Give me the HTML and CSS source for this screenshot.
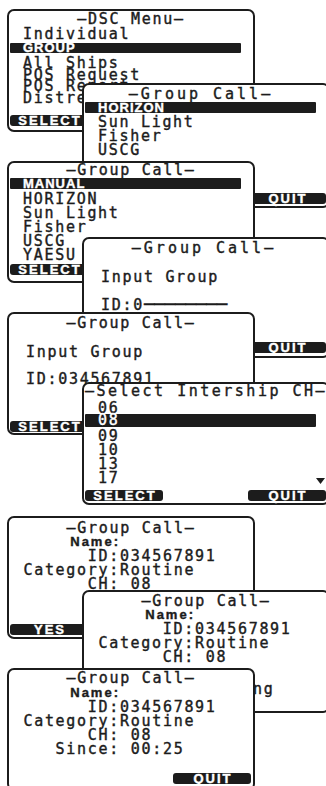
FILE: index.html
```html
<!DOCTYPE html>
<html lang="en">
  <head>
    <meta charset="UTF-8" />
    <meta name="viewport" content="width=device-width, initial-scale=1.0" />
    <title>DSC Group Call</title>
    <link rel="stylesheet" href="styles.css">
  </head>
  <body>
    <div class="sheet">
      <!-- step 1: DSC menu -->
      <section class="screen at-left dsc-menu">
        <div class="title">—DSC Menu—</div>
        <div class="row">Individual</div>
        <div class="row hi">GROUP</div>
        <div class="row">All Ships</div>
        <div class="row">POS Request</div>
        <div class="row">POS Report</div>
        <div class="row">Distress</div>
        <div class="keys"><span class="key">SELECT</span></div>
      </section>

      <!-- step 2: group directory -->
      <section class="screen at-right group-pick">
        <div class="title">—Group Call—</div>
        <div class="row hi">HORIZON</div>
        <div class="row">Sun Light</div>
        <div class="row">Fisher</div>
        <div class="row">USCG</div>
        <div class="keys"><span class="key blank"></span><span class="key">QUIT</span></div>
      </section>

      <!-- step 3: manual entry -->
      <section class="screen at-left group-manual">
        <div class="title">—Group Call—</div>
        <div class="row hi">MANUAL</div>
        <div class="row">HORIZON</div>
        <div class="row">Sun Light</div>
        <div class="row">Fisher</div>
        <div class="row">USCG</div>
        <div class="row">YAESU</div>
        <div class="keys"><span class="key">SELECT</span></div>
      </section>

      <!-- step 4: empty group id -->
      <section class="screen at-right id-input id-blank">
        <div class="title">—Group Call—</div>
        <div class="prompt">Input Group</div>
        <div class="id-line">ID:0<span class="dashes">────────</span></div>
        <div class="keys"><span class="key blank"></span><span class="key">QUIT</span></div>
      </section>

      <!-- step 5: filled group id -->
      <section class="screen at-left id-input id-full">
        <div class="title">—Group Call—</div>
        <div class="prompt">Input Group</div>
        <div class="id-line">ID:034567891</div>
        <div class="keys"><span class="key">SELECT</span></div>
      </section>

      <!-- step 6: intership channel -->
      <section class="screen at-right ch-pick">
        <div class="title">—Select Intership CH—</div>
        <div class="row">06</div>
        <div class="row hi">08</div>
        <div class="row">09</div>
        <div class="row">10</div>
        <div class="row">13</div>
        <div class="row last">17<svg class="more" width="9" height="6" viewBox="0 0 9 6"><path d="M0 0h9L4.5 6z" fill="#1c1c1c"/></svg></div>
        <div class="keys"><span class="key">SELECT</span><span class="key">QUIT</span></div>
      </section>

      <!-- step 7: confirm -->
      <section class="screen at-left call-info confirm">
        <div class="title">—Group Call—</div>
        <div class="fields">
          <span class="label name">Name:</span><span></span>
          <span class="label">ID:</span><span>034567891</span>
          <span class="label">Category:</span><span>Routine</span>
          <span class="label">CH:</span><span> 08</span>
        </div>
        <div class="keys"><span class="key">YES</span></div>
      </section>

      <!-- step 8: transmitting -->
      <section class="screen at-right call-info calling">
        <div class="title">—Group Call—</div>
        <div class="fields">
          <span class="label name">Name:</span><span></span>
          <span class="label">ID:</span><span>034567891</span>
          <span class="label">Category:</span><span>Routine</span>
          <span class="label">CH:</span><span> 08</span>
        </div>
        <div class="status">Transmitting</div>
      </section>

      <!-- step 9: call sent -->
      <section class="screen at-left call-info sent">
        <div class="title">—Group Call—</div>
        <div class="fields">
          <span class="label name">Name:</span><span></span>
          <span class="label">ID:</span><span>034567891</span>
          <span class="label">Category:</span><span>Routine</span>
          <span class="label">CH:</span><span> 08</span>
          <span class="label">Since:</span><span> 00:25</span>
        </div>
        <div class="keys"><span class="key blank"></span><span class="key">QUIT</span></div>
      </section>
    </div>
  </body>
</html>
```

FILE: styles.css
```css
* {
  margin: 0;
  padding: 0;
  box-sizing: border-box;
}

html,
body {
  overflow: hidden;
}

body {
  background: #fff;
  color: #1c1c1c;
  font-family: "DejaVu Sans Mono", monospace;
  font-size: 15px;
  letter-spacing: 1.7px;
  -webkit-text-stroke: 0.4px currentColor;
}

.sheet {
  display: flex;
  flex-direction: column;
  align-items: flex-start;
  padding-top: 9px;
}

/* one LCD screen */
.screen {
  position: relative;
  flex-shrink: 0;
  display: flex;
  flex-direction: column;
  width: 248px;
  height: 123px;
  border: 2px solid #1c1c1c;
  border-radius: 7px;
  background: #fff;
}

.at-left {
  margin-left: 7px;
}

.at-right {
  margin-left: 82px;
}

.title {
  height: 14px;
  line-height: 12px;
  text-align: center;
  white-space: pre;
}

.row {
  height: 14px;
  line-height: 12px;
  padding-left: 14px;
  white-space: pre;
}

.row.hi {
  width: 231px;
  height: 11px;
  margin: 0 0 3px 1px;
  padding-left: 13px;
  line-height: 11px;
  background: #1c1c1c;
  color: #fff;
  font-family: "Liberation Sans", Arial, sans-serif;
  font-weight: bold;
  font-size: 13px;
  letter-spacing: 1px;
  border-radius: 1px;
}

.keys {
  display: flex;
  justify-content: space-between;
  margin-top: auto;
  padding: 0 2px 0 1px;
}

.key {
  width: 78px;
  height: 11px;
  line-height: 11px;
  padding-left: 2px;
  background: #1c1c1c;
  color: #fff;
  border-radius: 3px;
  text-align: center;
  font-family: "Liberation Sans", Arial, sans-serif;
  font-weight: bold;
  font-size: 13px;
  letter-spacing: 2px;
}

.key.blank {
  visibility: hidden;
}

/* step 1 */
.dsc-menu .title {
  height: 15px;
  margin-top: 2px;
}

.dsc-menu .row {
  height: 11.7px;
}

.dsc-menu .row:nth-child(2) {
  height: 15px;
}

.dsc-menu .row.hi {
  height: 10px;
  line-height: 10px;
  margin-bottom: 4px;
}

.dsc-menu .keys {
  margin-bottom: 4px;
}

/* step 2 */
.group-pick {
  height: 125px;
  margin-top: -49px;
}

.group-pick .title {
  margin-top: 3px;
  padding-right: 10px;
  letter-spacing: 3px;
}

.group-pick .keys {
  margin-bottom: 2px;
}

/* step 3 */
.group-manual {
  height: 122px;
  margin-top: -47px;
}

.group-manual .title {
  margin-top: 1px;
}

.group-manual .row.hi {
  margin-bottom: 4px;
}

.group-manual .keys {
  margin-bottom: 6px;
}

/* steps 4 and 5 */
.id-input .title {
  margin-top: 2.5px;
}

.prompt,
.id-line {
  height: 14px;
  line-height: 12px;
  padding-left: 17px;
  white-space: pre;
}

.prompt {
  margin-top: 15.5px;
}

.id-line {
  margin-top: 13px;
}

.dashes {
  letter-spacing: 0;
  font-size: 17.3px;
}

.id-blank {
  height: 121px;
  margin-top: -46px;
}

.id-blank .title {
  padding-right: 4px;
  letter-spacing: 3px;
}

.id-blank .keys {
  margin-bottom: 3px;
}

.id-full {
  margin-top: -46px;
}

.id-full .keys {
  margin-bottom: 1px;
}

/* step 6 */
.ch-pick {
  margin-top: -53px;
}

.ch-pick .title {
  height: 17px;
  margin-top: 1px;
  letter-spacing: 2.5px;
}

.ch-pick .row.hi {
  height: 13px;
  margin-top: -2px;
  line-height: 13px;
  font-family: "DejaVu Sans Mono", monospace;
  font-weight: normal;
  font-size: 15px;
  letter-spacing: 1.7px;
}

.ch-pick .row.last {
  display: flex;
  justify-content: space-between;
  padding-right: 3px;
}

.more {
  margin-top: 6px;
}

.ch-pick .keys {
  margin-bottom: 2px;
}

/* steps 7 to 9 */
.fields {
  display: grid;
  grid-template-columns: 97px auto;
  grid-auto-rows: 14px;
  line-height: 12px;
  padding-left: 14px;
  white-space: pre;
}

.label {
  text-align: right;
}

.label.name {
  font-family: "Liberation Sans", Arial, sans-serif;
  font-weight: bold;
  font-size: 13px;
  letter-spacing: 2px;
}

.confirm {
  margin-top: 11px;
}

.confirm .title {
  margin-top: 4px;
}

.confirm .keys {
  margin-bottom: 2px;
}

.calling {
  margin-top: -49px;
}

.calling .title {
  margin-top: 3px;
}

.status {
  margin-top: 18px;
  padding-left: 8px;
  line-height: 12px;
  text-align: center;
}

.sent {
  margin-top: -45px;
}

.sent .title {
  height: 15px;
  margin-top: 2px;
}

.sent .keys {
  margin-bottom: 5px;
}
```
